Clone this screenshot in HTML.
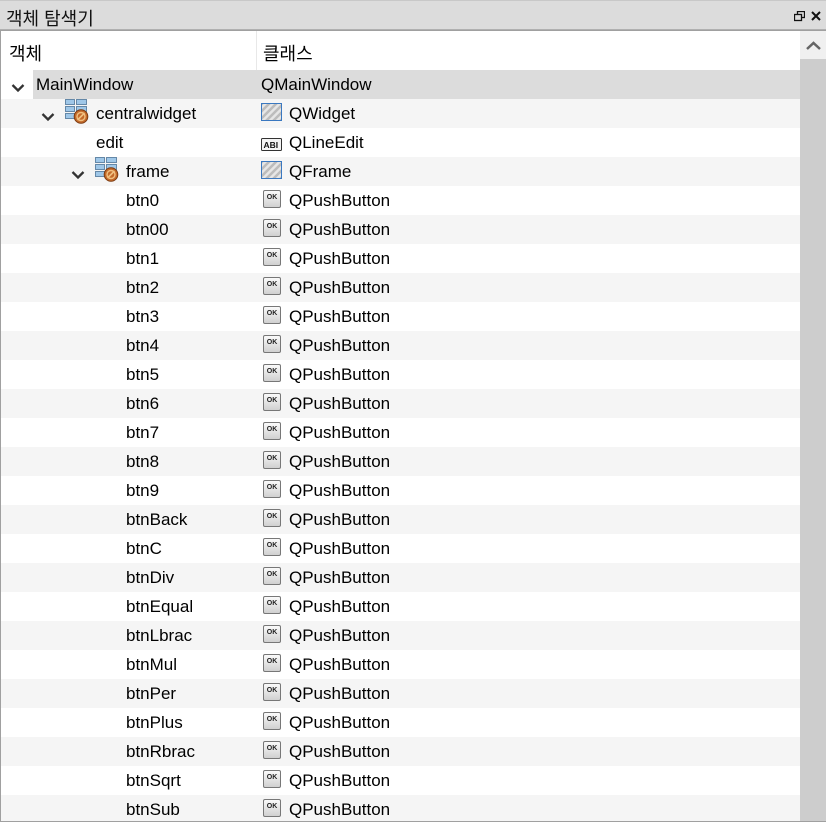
<!DOCTYPE html>
<html><head><meta charset="utf-8"><style>
*{margin:0;padding:0;box-sizing:border-box}
body{width:826px;height:822px;overflow:hidden;background:#f0f0f0;font-family:"Liberation Sans","Noto Sans CJK KR",sans-serif;font-size:17px;color:#000;position:relative}
.title{position:absolute;left:0;top:0;width:826px;height:30px;background:#dcdcdc;border-top:1px solid #c8c8c8;border-bottom:1px solid #b0b0b0}
.title span{position:absolute;left:6px;top:4px;font-size:18px;color:#111}
.panel{position:absolute;left:0;top:30px;width:826px;height:792px;background:#fff;border:1px solid #a0a0a0;border-right:none;overflow:hidden}
.hdr{position:absolute;left:0;top:0;width:800px;height:39px;background:#fff}
.hdr .c1{position:absolute;left:8px;top:9px;font-size:18px}
.hdr .c2{position:absolute;left:262px;top:9px;font-size:18px}
.hdr .div{position:absolute;left:255px;top:0;width:1px;height:39px;background:#e8e8e8}
.row{position:absolute;left:0;width:799px;height:29px}
.row.alt{background:#f5f5f5}
.row .t{position:absolute;top:5px;white-space:nowrap}
.sb{position:absolute;left:799px;top:0;width:27px;height:792px;background:#f0f0f0}
.thumb{position:absolute;left:0;top:28px;width:27px;height:764px;background:#cdcdcd}
.arr{position:absolute;top:8px}
.ok{position:absolute;left:262px;top:4px;width:18px;height:18px;border:1px solid #777;border-radius:2px;background:linear-gradient(#fafafa,#d0d0d0);font-size:7px;font-weight:bold;text-align:center;line-height:14px;color:#222;font-family:"Liberation Sans",sans-serif}
</style></head><body>
<div class="title"><span>객체 탐색기</span>
<svg style="position:absolute;left:794px;top:10px" width="11" height="11"><rect x="3.5" y="0.5" width="7" height="6" fill="none" stroke="#111" stroke-width="1.3"/><rect x="0.5" y="3.5" width="7" height="6" fill="#dcdcdc" stroke="#111" stroke-width="1.3"/></svg>
<svg style="position:absolute;left:811px;top:10px" width="10" height="10"><path d="M1 1L9 9M9 1L1 9" stroke="#111" stroke-width="2"/></svg>
</div>
<div class="panel">
<div class="hdr"><span class="c1">객체</span><div class="div"></div><span class="c2">클래스</span></div>
<div class="row" style="top:39px;left:32px;width:767px;background:#dcdcdc"></div>
<div id="rows"></div>
<div class="sb"><div class="thumb"></div>
<svg style="position:absolute;left:6px;top:10px" width="15" height="10"><path d="M1 8L7.5 2L14 8" fill="none" stroke="#666" stroke-width="2.5"/></svg></div>
</div>
<script>
var C='<svg width="24" height="25" viewBox="0 0 24 25"><g fill="#9fc7e8" stroke="#5a7fa0" stroke-width="0.9"><rect x="0.5" y="0.5" width="9" height="5"/><rect x="11.5" y="0.5" width="10" height="5"/><rect x="0.5" y="7.5" width="9" height="5"/><rect x="11.5" y="7.5" width="10" height="5"/><rect x="0.5" y="14.5" width="9" height="5"/></g><circle cx="16" cy="17.5" r="6.8" fill="#c46a2a" stroke="#7a3a10"/><circle cx="16" cy="17.5" r="4" fill="none" stroke="#f0c080" stroke-width="1.4"/><path d="M12.5 21L19.5 14" stroke="#f0c080" stroke-width="1.6"/></svg>';
var W='<svg width="21" height="18"><defs><pattern id="p" width="5" height="5" patternUnits="userSpaceOnUse" patternTransform="rotate(45)"><rect width="5" height="5" fill="#e6e6e6"/><rect width="2.5" height="5" fill="#bcbcbc"/></pattern></defs><rect x="0.5" y="0.5" width="20" height="17" fill="url(#p)" stroke="#3a78c0"/></svg>';
var L='<svg width="21" height="13"><rect x="0.5" y="0.5" width="20" height="12" rx="1" fill="#f4f4f4" stroke="#333"/><text x="2.5" y="10" font-size="8.5" font-weight="bold" font-family="Liberation Sans" fill="#111">ABI</text></svg>';
var A='<svg width="14" height="10"><path d="M1.5 2L7 7.5L12.5 2" fill="none" stroke="#333" stroke-width="2.3"/></svg>';
var rows=[[0,1,'MainWindow',0,'QMainWindow',''],[1,1,'centralwidget',1,'QWidget','W'],[2,0,'edit',0,'QLineEdit','L'],[2,1,'frame',1,'QFrame','W']];
'btn0 btn00 btn1 btn2 btn3 btn4 btn5 btn6 btn7 btn8 btn9 btnBack btnC btnDiv btnEqual btnLbrac btnMul btnPer btnPlus btnRbrac btnSqrt btnSub'.split(' ').forEach(function(n){rows.push([3,0,n,0,'QPushButton','O'])});
var h='';
rows.forEach(function(r,i){
 var top=39+29*i;var lv=r[0];
 h+='<div class="row'+(i%2?' alt':'')+'" style="top:'+top+'px">';
 if(r[1]) h+='<span class="arr" style="left:'+(10+30*lv)+'px">'+A+'</span>';
 var tx=lv==0?35:(lv==1?95:(lv==2?95:125));
 if(r[3]){var ix=lv==1?64:94;h+='<span style="position:absolute;left:'+ix+'px;top:0px">'+C+'</span>';tx=ix+31;}
 h+='<span class="t" style="left:'+tx+'px">'+r[2]+'</span>';
 var cx=288;
 if(r[5]=='W')h+='<span style="position:absolute;left:260px;top:4px">'+W+'</span>';
 else if(r[5]=='L')h+='<span style="position:absolute;left:260px;top:8px">'+L+'</span>';
 else if(r[5]=='O')h+='<div class="ok">OK</div>';
 else cx=260;
 h+='<span class="t" style="left:'+cx+'px">'+r[4]+'</span></div>';
});
document.getElementById('rows').innerHTML=h;
</script>
</body></html>
